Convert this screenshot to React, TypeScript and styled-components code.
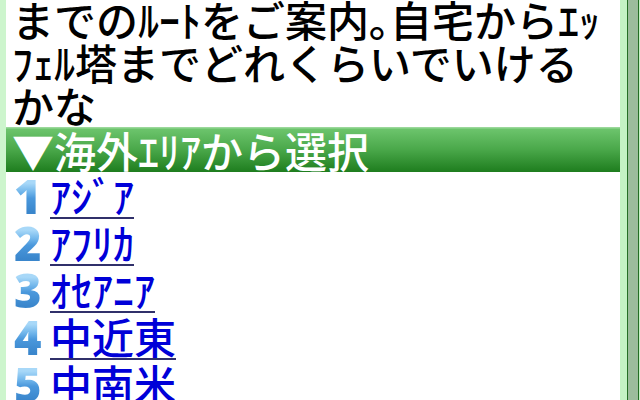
import styled, { createGlobalStyle } from "styled-components";

const GlobalStyle = createGlobalStyle`
  html, body {
    margin: 0;
    padding: 0;
    background: #fff;
    overflow: hidden;
  }
`;

const areas = [
  { no: "1", name: "ｱｼﾞｱ" },
  { no: "2", name: "ｱﾌﾘｶ" },
  { no: "3", name: "ｵｾｱﾆｱ" },
  { no: "4", name: "中近東" },
  { no: "5", name: "中南米" },
];

function App() {
  return (
    <>
      <GlobalStyle />
      <Screen>
        <LeftEdge />
        <Page>
          <Intro>までのﾙｰﾄをご案内｡自宅からｴｯﾌｪﾙ塔までどれくらいでいけるかな</Intro>
          <SectionHeader>▼海外ｴﾘｱから選択</SectionHeader>
          <AreaList>
            {areas.map((a) => (
              <AreaRow key={a.no}>
                <KeyNumber>{a.no}</KeyNumber>
                <AreaLink href="#">{a.name}</AreaLink>
              </AreaRow>
            ))}
          </AreaList>
        </Page>
        <ScrollBar>
          <ScrollTrack />
        </ScrollBar>
      </Screen>
    </>
  );
}

export default App;

const Screen = styled.div`
  display: flex;
  width: 640px;
  height: 400px;
  overflow: hidden;
  font-family: "Noto Sans CJK JP", "Noto Sans", sans-serif;
`;

const LeftEdge = styled.div`
  width: 6px;
  flex-shrink: 0;
  background: #cdf5cd;
`;

const Page = styled.div`
  width: 614px;
  flex-shrink: 0;
  background: #fff;
`;

const Intro = styled.p`
  margin: -3px 0 0;
  padding: 0 16px 0 6px;
  font-size: 42px;
  font-weight: 500;
  line-height: 43px;
  height: 130px;
  color: #000;
`;

const SectionHeader = styled.div`
  height: 45px;
  display: flex;
  align-items: center;
  padding-left: 6px;
  font-size: 42px;
  font-weight: 500;
  line-height: 45px;
  color: #fff;
  background: linear-gradient(#9ad89a 0, #9ad89a 1px, #6cc46c 2px, #4aa84a 50%, #1e7d1e 100%);
  white-space: nowrap;
`;

const AreaList = styled.ul`
  list-style: none;
  margin: 0;
  padding: 0;
`;

const AreaRow = styled.li`
  height: 47px;
  display: flex;
  align-items: flex-end;
  padding-left: 8px;
`;

const KeyNumber = styled.span`
  width: 36px;
  height: 46px;
  display: flex;
  align-items: center;
  font-family: "Open Sans", sans-serif;
  font-weight: 800;
  font-size: 47px;
  line-height: 46px;
  letter-spacing: -1px;
  background: linear-gradient(#a8d8f8 22%, #74b8ec 40%, #4a98dc 55%, #3a86cc 85%);
  -webkit-background-clip: text;
  background-clip: text;
  color: transparent;
`;

const AreaLink = styled.a`
  font-size: 42px;
  font-weight: 500;
  line-height: 44px;
  color: #0000d8;
  text-decoration: none;
  border-bottom: 2px solid #30306a;
  white-space: nowrap;
`;

const ScrollBar = styled.div`
  width: 20px;
  flex-shrink: 0;
  display: flex;
  background: #c4f2c4;
  padding-left: 7px;
  box-sizing: border-box;
`;

const ScrollTrack = styled.div`
  width: 12px;
  background: #9cbc9c;
  border-left: 1px solid #246e24;
  border-right: 1px solid #246e24;
  box-sizing: border-box;
`;
